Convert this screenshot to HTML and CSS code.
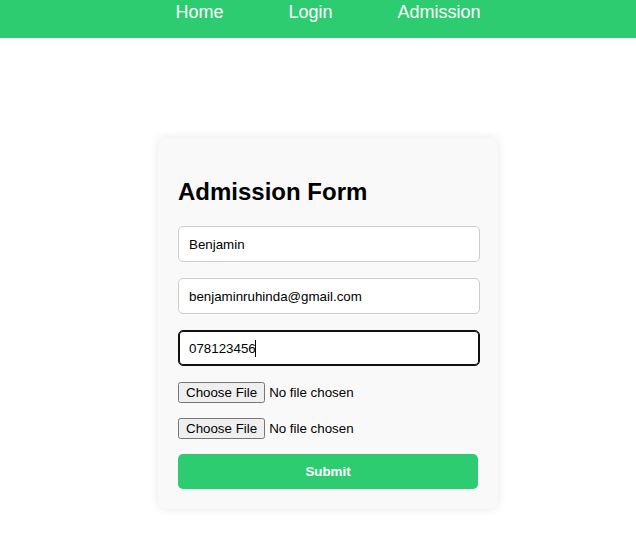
FILE: index.html
```html
<!DOCTYPE html>
<html lang="en">
<head>
<meta charset="utf-8">
<title>Admission Form</title>
<link rel="stylesheet" href="styles.css">
</head>
<body>
<header class="topbar">
  <nav>
    <ul class="nav-list">
      <li><a href="#" class="nav-link">Home</a></li>
      <li><a href="#" class="nav-link">Login</a></li>
      <li><a href="#" class="nav-link">Admission</a></li>
    </ul>
  </nav>
</header>
<main class="page">
  <div class="card">
    <h2 class="title">Admission Form</h2>
    <form class="form">
      <input class="field" type="text" value="Benjamin">
      <input class="field" type="email" value="benjaminruhinda@gmail.com">
      <div class="field-wrap">
        <input class="field is-focused" type="text" value="078123456">
        <span class="caret"></span>
      </div>
      <input class="file" type="file">
      <input class="file" type="file">
      <button class="submit" type="button">Submit</button>
    </form>
  </div>
</main>
</body>
</html>
```
FILE: styles.css
```css
html, body {
  margin: 0;
  padding: 0;
  background: #ffffff;
  font-family: "Liberation Sans", Arial, sans-serif;
}

.topbar {
  background: #2ecc71;
  height: 38px;
}

.nav-list {
  list-style: none;
  margin: 0;
  padding: 2px 0 0 20px;
  display: flex;
  justify-content: center;
  gap: 65px;
}

.nav-link {
  color: #ffffff;
  text-decoration: none;
  font-size: 18px;
}

.page {
  display: flex;
  justify-content: center;
  padding: 100px 0 20px 20px;
}

.card {
  width: 300px;
  padding: 20px;
  background: #f9f9f9;
  border-radius: 8px;
  box-shadow: 0 0 10px rgba(0, 0, 0, 0.1);
}

.title {
  font-size: 24px;
  font-weight: bold;
  color: #000;
  margin: 20px 0 20px;
}

.form {
  display: flex;
  flex-direction: column;
  align-items: flex-start;
}

.field {
  width: calc(100% - 20px);
  height: 14px;
  padding: 10px;
  margin: 0 0 16px;
  border: 1px solid #cccccc;
  border-radius: 5px;
  background: #fff;
  font-family: "Liberation Sans", Arial, sans-serif;
  font-size: 13.333px;
  color: #000;
  outline: none;
}

.field-wrap {
  position: relative;
  width: 100%;
}

.field-wrap .field {
  display: block;
}

.field.is-focused {
  border-color: #101010;
  box-shadow: inset 0 0 0 1px #101010;
}

.caret {
  position: absolute;
  left: 77px;
  top: 10px;
  width: 1px;
  height: 17px;
  background: #000;
}

.file {
  font-family: "Liberation Sans", Arial, sans-serif;
  font-size: 13.333px;
  margin: 0 0 15px;
}

.submit {
  width: 100%;
  height: 35px;
  margin-top: 0;
  border: none;
  border-radius: 5px;
  background: #2ecc71;
  color: #fff;
  font-family: "Liberation Sans", Arial, sans-serif;
  font-size: 13.333px;
  font-weight: bold;
  cursor: pointer;
}
```
